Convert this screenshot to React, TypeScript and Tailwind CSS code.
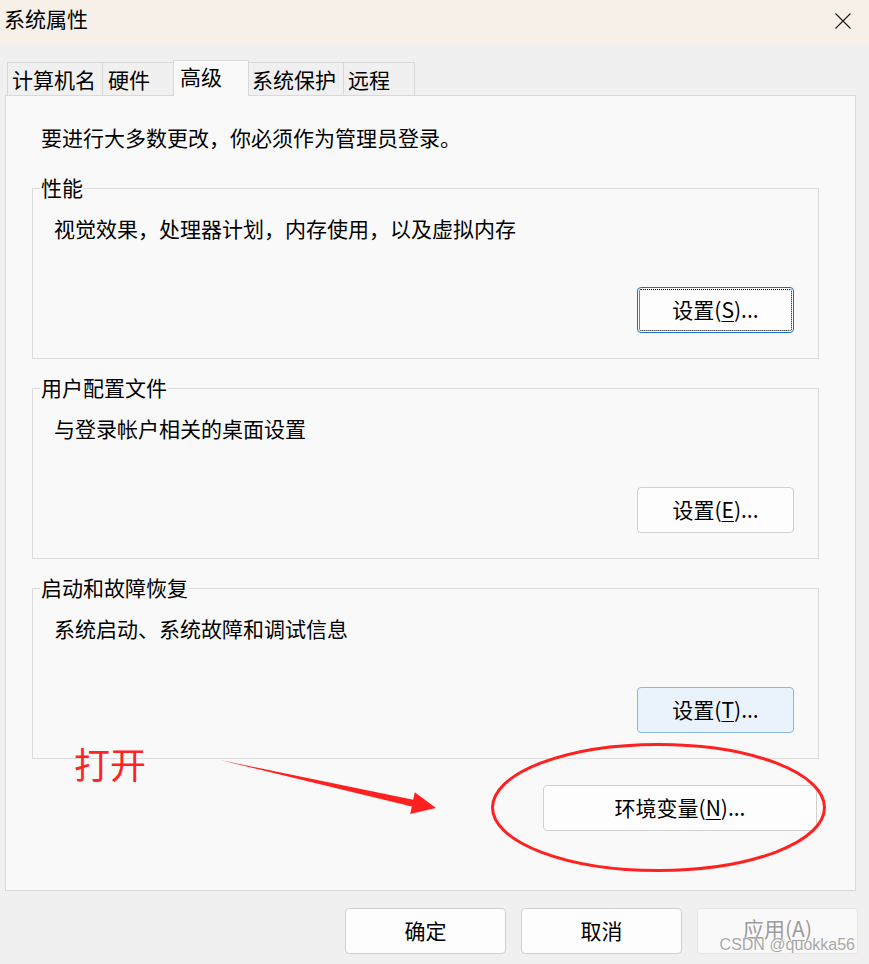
import React from "react";

type Variant = "normal" | "focus" | "hover" | "disabled";

function WinButton({
  children,
  variant = "normal",
  className = "",
}: {
  children: React.ReactNode;
  variant?: Variant;
  className?: string;
}) {
  const base =
    "relative flex items-center justify-center h-[46px] rounded-[4px] border text-[21px] leading-[28px] ";
  const v =
    variant === "focus"
      ? "border-[#1b6fc8] bg-[#fdfdfd] text-black"
      : variant === "hover"
      ? "border-[#8cb7e2] bg-[#eaf3fc] text-black"
      : variant === "disabled"
      ? "border-[#e6e6e6] bg-[#f9f9f9] text-[#9c9c9c]"
      : "border-[#d0d0d0] bg-[#fdfdfd] text-black";
  return (
    <div className={base + v + " " + className}>
      {variant === "focus" && (
        <span className="absolute inset-[1px] border border-dotted border-black rounded-[2px]" />
      )}
      <span className="relative top-[-1px]">{children}</span>
    </div>
  );
}

function Acc({ children }: { children: React.ReactNode }) {
  return (
    <span className="underline decoration-1 underline-offset-[3px]">{children}</span>
  );
}

function Group({
  legend,
  desc,
  button,
  className = "",
}: {
  legend: string;
  desc: string;
  button: React.ReactNode;
  className?: string;
}) {
  return (
    <div
      className={
        "relative h-[171px] border border-[#dcdcdc] pt-[25px] pl-[21px] pr-[24px] " +
        className
      }
    >
      <div className="absolute left-[7px] top-[-16px] px-[1px] bg-[#f9f9f9] text-[21px] leading-[28px]">
        {legend}
      </div>
      <div className="text-[21px] leading-[28px]">{desc}</div>
      <div className="flex justify-end mt-[45px]">{button}</div>
    </div>
  );
}

const tabs = [
  { label: "计算机名", cls: "w-[96px] pl-[4px]", sel: false },
  { label: "硬件", cls: "w-[72px] pl-[5px] -ml-px", sel: false },
  { label: "高级", cls: "w-[76px] pl-[6px] -ml-px", sel: true },
  { label: "系统保护", cls: "w-[96px] pl-[3px] -ml-px", sel: false },
  { label: "远程", cls: "w-[72px] pl-[4px] -ml-px", sel: false },
];

export default function App() {
  return (
    <div className="relative w-[869px] h-[964px] overflow-hidden bg-[#f0f0f0] text-black font-['Noto_Sans_CJK_SC','Noto_Sans',sans-serif]">
      {/* Title bar */}
      <div className="flex h-[45px] items-start justify-between bg-[#f7f0e9] pr-[18px]">
        <div className="pl-[4px] pt-[4px] text-[21px] leading-[28px]">系统属性</div>
        <svg className="mt-[13px]" width="16" height="16" viewBox="0 0 16 16">
          <path d="M0.5 0.5 L15.5 15.5 M15.5 0.5 L0.5 15.5" stroke="#1a1a1a" strokeWidth="1.1" fill="none" />
        </svg>
      </div>

      {/* Tabs */}
      <div className="relative z-10 mt-[15px] flex h-[35px] items-start pl-[7px]">
        {tabs.map((t) =>
          t.sel ? (
            <div
              key={t.label}
              className={
                "relative z-10 h-[36px] border border-b-0 border-[#d9d9d9] bg-[#f9f9f9] pt-[1px] text-[21px] leading-[28px] " +
                t.cls
              }
            >
              {t.label}
            </div>
          ) : (
            <div
              key={t.label}
              className={
                "mt-[2px] h-[33px] border border-b-0 border-[#d9d9d9] bg-[#f0f0f0] pt-[2px] text-[21px] leading-[28px] " +
                t.cls
              }
            >
              {t.label}
            </div>
          )
        )}
      </div>

      {/* Panel */}
      <div className="ml-[5px] h-[796px] w-[851px] border border-[#d9d9d9] bg-[#f9f9f9] pl-[26px] pr-[36px] pt-[27px]">
        <div className="pl-[9px] text-[21px] leading-[28px]">
          要进行大多数更改，你必须作为管理员登录。
        </div>

        <Group
          className="mt-[37px]"
          legend="性能"
          desc="视觉效果，处理器计划，内存使用，以及虚拟内存"
          button={
            <WinButton variant="focus" className="w-[157px]">
              设置(<Acc>S</Acc>)...
            </WinButton>
          }
        />
        <Group
          className="mt-[29px]"
          legend="用户配置文件"
          desc="与登录帐户相关的桌面设置"
          button={
            <WinButton className="w-[157px]">
              设置(<Acc>E</Acc>)...
            </WinButton>
          }
        />
        <Group
          className="mt-[29px]"
          legend="启动和故障恢复"
          desc="系统启动、系统故障和调试信息"
          button={
            <WinButton variant="hover" className="w-[157px]">
              设置(<Acc>T</Acc>)...
            </WinButton>
          }
        />

        <div className="mt-[26px] flex justify-end pr-[2px]">
          <WinButton className="w-[274px]">
            环境变量(<Acc>N</Acc>)...
          </WinButton>
        </div>
      </div>

      {/* Bottom buttons */}
      <div className="mt-[17px] flex justify-end gap-[15px] pr-[11px]">
        <WinButton className="w-[161px]">确定</WinButton>
        <WinButton className="w-[161px]">取消</WinButton>
        <WinButton variant="disabled" className="w-[161px]">
          <span className="relative top-[-2px]">
            应用(<Acc>A</Acc>)
          </span>
        </WinButton>
      </div>

      {/* Annotations */}
      <div className="pointer-events-none absolute left-[74px] top-[745px] text-[36px] leading-[36px] text-[#ff2424]">
        打开
      </div>
      <svg
        className="pointer-events-none absolute left-0 top-0"
        width="869"
        height="964"
        viewBox="0 0 869 964"
      >
        <polygon
          points="220,760 413.2,799.7 414.8,792.3 436,808 410.2,813.9 411.8,806.5"
          fill="#ff2020"
        />
        <ellipse cx="658.5" cy="807.5" rx="166" ry="63" fill="none" stroke="#ff2020" strokeWidth="3" />
      </svg>

      {/* Watermark */}
      <div className="pointer-events-none absolute right-[14px] top-[937px] font-['Liberation_Sans',Arial,sans-serif] text-[16px] leading-[16px] text-[#a8a8a8] [text-shadow:0_0_2px_#ffffff]">
        CSDN @quokka56
      </div>
    </div>
  );
}
